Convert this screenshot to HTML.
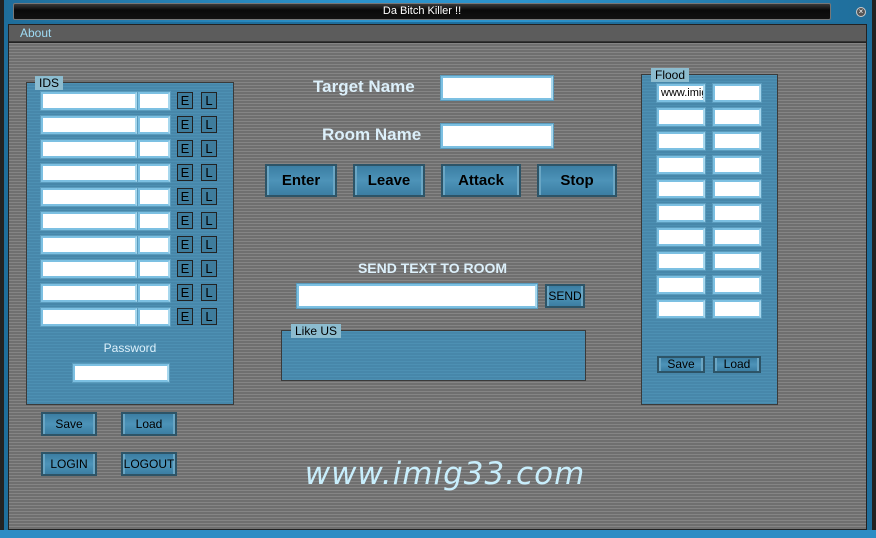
<!DOCTYPE html>
<html><head><style>
*{margin:0;padding:0;box-sizing:border-box}
body{width:876px;height:538px;overflow:hidden;background:#1b1b1b;font-family:"Liberation Sans",sans-serif;position:relative}
.a{position:absolute}
#main{left:9px;top:43px;width:857px;height:486px;background:repeating-linear-gradient(#858585 0 1px,#6f6f6f 1px 3px)}
.panel{position:absolute;background:repeating-linear-gradient(#4d90b3 0 1px,#4787aa 1px 3px);border:1px solid #3a3a3a}
.lbl{position:absolute;background:#8cbccf;color:#000;font-size:11px;padding:0 4px;height:14px;line-height:14px}
.in{position:absolute;background:#fff;border:2px solid #7cc0e2;border-right-color:#a8d8ee;box-shadow:0 0 0 1px #5b9cbd}
.btn{position:absolute;background:linear-gradient(#3b7ea3,#4d93b8 50%,#3b7ea3);border:2px solid #2d5467;box-shadow:inset 2px 0 0 #6aa6c4,inset -2px 0 0 #6aa6c4;color:#000;text-align:center;font-size:12px}
.big{font-weight:bold;font-size:15px;line-height:29px}
.eb{position:absolute;width:16px;height:17px;background:#3e7c9c;border:1px solid #222;color:#000;font-size:13px;line-height:15px;text-align:center}
.t{position:absolute;color:#dcf0fb;font-size:17px;font-weight:bold}
</style></head><body>
<div class="a" style="left:0;top:0;width:876px;height:538px;background:#222"></div>
<div class="a" style="left:4px;top:0;width:868px;height:22px;background:linear-gradient(90deg,#1f6d9a,#2c93cc 40%,#2c93cc 60%,#1f6d9a)"></div>
<div class="a" style="left:13px;top:3px;width:818px;height:17px;background:linear-gradient(#3a3a3a,#0a0a0a 40%,#111);border:1px solid #777;border-radius:2px;color:#fff;font-size:11px;text-align:center;line-height:15px">Da Bitch Killer !!</div>
<div class="a" style="left:856px;top:7px;width:10px;height:10px;border-radius:50%;background:#555;border:1px solid #ccc;color:#fff;font-size:8px;line-height:8px;text-align:center">×</div>
<div class="a" style="left:4px;top:22px;width:868px;height:516px;background:#1e6e9c"></div>
<div class="a" style="left:8px;top:24px;width:859px;height:506px;background:#222"></div>
<div class="a" style="left:9px;top:25px;width:857px;height:17px;background:#5c5c5c;border-bottom:1px solid #333;color:#9fdcf5;font-size:12px;line-height:17px;padding-left:11px">About</div>
<div class="a" id="main"></div>
<div class="a" style="left:0;top:530px;width:876px;height:8px;background:#2c8cc4"></div>

<div class="panel" style="left:26px;top:82px;width:208px;height:323px"></div>
<div class="lbl" style="left:35px;top:76px;font-size:12px">IDS</div>
<div id="ids"></div>
<div class="a" style="left:26px;top:341px;width:208px;text-align:center;color:#dcf0fb;font-size:12px">Password</div>
<div class="in" style="left:73px;top:364px;width:96px;height:18px"></div>
<div class="btn" style="left:41px;top:412px;width:56px;height:24px;line-height:20px">Save</div>
<div class="btn" style="left:121px;top:412px;width:56px;height:24px;line-height:20px">Load</div>
<div class="btn" style="left:41px;top:452px;width:56px;height:24px;line-height:20px">LOGIN</div>
<div class="btn" style="left:121px;top:452px;width:56px;height:24px;line-height:20px">LOGOUT</div>

<div class="t" style="left:313px;top:77px">Target Name</div>
<div class="in" style="left:441px;top:76px;width:112px;height:24px"></div>
<div class="t" style="left:322px;top:125px">Room Name</div>
<div class="in" style="left:441px;top:124px;width:112px;height:24px"></div>
<div class="btn big" style="left:265px;top:164px;width:72px;height:33px">Enter</div>
<div class="btn big" style="left:353px;top:164px;width:72px;height:33px">Leave</div>
<div class="btn big" style="left:441px;top:164px;width:80px;height:33px">Attack</div>
<div class="btn big" style="left:537px;top:164px;width:80px;height:33px">Stop</div>
<div class="t" style="left:280px;top:260px;width:305px;text-align:center;font-size:14px">SEND TEXT TO ROOM</div>
<div class="in" style="left:297px;top:284px;width:240px;height:24px"></div>
<div class="btn" style="left:545px;top:284px;width:40px;height:24px;line-height:20px">SEND</div>
<div class="panel" style="left:281px;top:330px;width:305px;height:51px"></div>
<div class="lbl" style="left:291px;top:324px;font-size:12px">Like US</div>

<div class="panel" style="left:641px;top:74px;width:137px;height:331px"></div>
<div class="lbl" style="left:651px;top:68px;font-size:12px">Flood</div>
<div id="fl"></div>
<div class="btn" style="left:657px;top:356px;width:48px;height:17px;line-height:13px">Save</div>
<div class="btn" style="left:713px;top:356px;width:48px;height:17px;line-height:13px">Load</div>

<div class="a" style="left:290px;top:456px;width:310px;text-align:center;color:#c8eefc;font-size:31px;font-style:italic;font-family:'DejaVu Sans',sans-serif;letter-spacing:1px">www.imig33.com</div>
<script>
var h='';for(var i=0;i<10;i++){var y=92+i*24;h+='<div class="in" style="left:41px;top:'+y+'px;width:96px;height:18px"></div><div class="in" style="left:138px;top:'+y+'px;width:32px;height:18px"></div><div class="eb" style="left:177px;top:'+y+'px">E</div><div class="eb" style="left:201px;top:'+y+'px">L</div>';}
document.getElementById('ids').innerHTML=h;
h='';for(i=0;i<10;i++){y=84+i*24;h+='<div class="in" style="left:657px;top:'+y+'px;width:48px;height:18px;font-size:11px;line-height:14px;padding-left:2px;overflow:hidden;white-space:nowrap">'+(i?'':'www.imig')+'</div><div class="in" style="left:713px;top:'+y+'px;width:48px;height:18px"></div>';}
document.getElementById('fl').innerHTML=h;
</script>
</body></html>
